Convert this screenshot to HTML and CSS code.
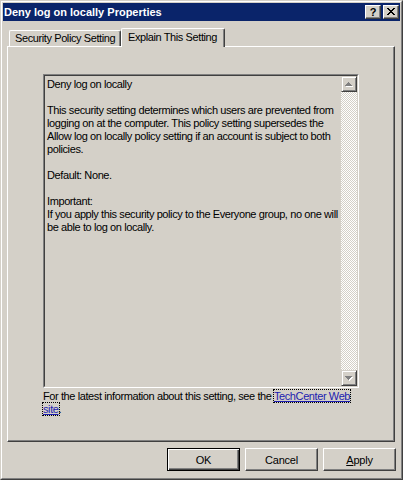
FILE: index.html
```html
<!DOCTYPE html>
<html lang="en">
<head>
    <meta charset="UTF-8">
    <title>Deny log on locally Properties</title>
    <link rel="stylesheet" href="styles.css">
</head>
<body>
    <div class="window">
        <div class="frame">
            <div class="titlebar">
                <span class="title">Deny log on locally Properties</span>
                <div class="caption-buttons">
                    <span class="caption-btn help">?</span>
                    <span class="caption-btn close">
                        <svg width="8" height="7" viewBox="0 0 8 7">
                            <path d="M0 0h2v1h-2zM6 0h2v1h-2zM1 1h2v1h-2zM5 1h2v1h-2zM2 2h4v1h-4zM3 3h2v1h-2zM2 4h4v1h-4zM1 5h2v1h-2zM5 5h2v1h-2zM0 6h2v1h-2zM6 6h2v1h-2z" fill="#000"/>
                        </svg>
                    </span>
                </div>
            </div>

            <div class="content">
                <div class="tabs">
                    <div class="tab tab-policy">Security Policy Setting</div>
                    <div class="tab tab-explain selected">Explain This Setting</div>
                </div>

                <div class="panel">
                    <div class="explain-box">
                        <div class="explain-inner">
                            <div class="explain-text">
                                <p>Deny log on locally</p>
                                <p>This security setting determines which users are prevented from logging on at the computer. This policy setting supersedes the Allow log on locally policy setting if an account is subject to both policies.</p>
                                <p>Default: None.</p>
                                <p>Important:<br>If you apply this security policy to the Everyone group, no one will be able to log on locally.</p>
                            </div>
                            <div class="scrollbar">
                                <div class="scroll-btn">
                                    <svg width="8" height="5" viewBox="0 0 8 5">
                                        <path d="M4 1h1v1h-1zM3 2h3v1h-3zM2 3h5v1h-5zM1 4h7v1h-7z" fill="#fff"/>
                                        <path d="M3 0h1v1h-1zM2 1h3v1h-3zM1 2h5v1h-5zM0 3h7v1h-7z" fill="#808080"/>
                                    </svg>
                                </div>
                                <div class="scroll-track"></div>
                                <div class="scroll-btn">
                                    <svg width="8" height="5" viewBox="0 0 8 5">
                                        <path d="M1 1h7v1h-7zM2 2h5v1h-5zM3 3h3v1h-3zM4 4h1v1h-1z" fill="#fff"/>
                                        <path d="M0 0h7v1h-7zM1 1h5v1h-5zM2 2h3v1h-3zM3 3h1v1h-1z" fill="#808080"/>
                                    </svg>
                                </div>
                            </div>
                        </div>
                    </div>
                    <p class="more-info">For the latest information about this setting, see the <a href="#" class="link"><span class="focus">TechCenter Web</span> <span class="focus">site</span></a>.</p>
                </div>

                <div class="buttons">
                    <button class="btn default">OK</button>
                    <button class="btn">Cancel</button>
                    <button class="btn"><u>A</u>pply</button>
                </div>
            </div>
        </div>
    </div>
</body>
</html>
```

FILE: styles.css
```css
:root {
    --face: #d4d0c8;
    --light: #ffffff;
    --shadow: #808080;
    --dark: #404040;
    --title: #0a246a;
}

* {
    margin: 0;
    padding: 0;
    box-sizing: border-box;
}

body {
    font-family: Tahoma, 'Liberation Sans', Arial, sans-serif;
    font-size: 11px;
    color: #000;
    background-color: var(--face);
}

.window {
    width: 403px;
    height: 480px;
    background-color: var(--face);
    border: 1px solid;
    border-color: var(--face) var(--dark) var(--dark) var(--face);
}

.frame {
    height: 100%;
    border: 1px solid;
    border-color: var(--light) var(--shadow) var(--shadow) var(--light);
    padding: 1px;
    display: flex;
    flex-direction: column;
}

.titlebar {
    height: 18px;
    background-color: var(--title);
    display: flex;
    align-items: center;
    justify-content: space-between;
    padding: 0 1px 0 1px;
}

.title {
    color: #fff;
    font-weight: bold;
    line-height: 18px;
}

.caption-buttons {
    display: flex;
    gap: 2px;
}

.caption-btn {
    width: 16px;
    height: 14px;
    background-color: var(--face);
    border: 1px solid;
    border-color: var(--light) var(--dark) var(--dark) var(--light);
    box-shadow: inset -1px -1px var(--shadow);
    display: flex;
    align-items: center;
    justify-content: center;
}

.caption-btn.help {
    font-weight: bold;
    font-size: 11px;
    line-height: 12px;
    padding-bottom: 1px;
}

.caption-btn.close svg {
    margin-top: -1px;
}

.content {
    flex: 1;
    padding: 7px 5px 0 4px;
    letter-spacing: -0.4px;
}

.tabs {
    height: 18px;
    display: flex;
    align-items: flex-end;
    padding-left: 2px;
}

.tab {
    height: 16px;
    line-height: 13px;
    padding: 1px 0 0 5px;
    border-top: 1px solid var(--light);
    border-left: 1px solid var(--light);
    border-right: 1px solid var(--dark);
    border-radius: 2px 2px 0 0;
    box-shadow: inset -1px 0 var(--shadow);
    white-space: nowrap;
}

.tab-policy {
    width: 112px;
}

.tab-explain {
    width: 104px;
}

.tab.selected {
    height: 19px;
    margin-bottom: -1px;
    padding: 2px 0 0 6px;
    background-color: var(--face);
    position: relative;
    z-index: 1;
}

.panel {
    height: 396px;
    border: 1px solid;
    border-color: var(--light) var(--dark) var(--dark) var(--light);
    box-shadow: inset -1px -1px var(--shadow);
    padding: 27px 0 0 35px;
}

.explain-box {
    width: 316px;
    height: 314px;
    border: 1px solid;
    border-color: var(--shadow) var(--light) var(--light) var(--shadow);
}

.explain-inner {
    height: 100%;
    display: flex;
    border: 1px solid;
    border-color: var(--dark) var(--face) var(--face) var(--dark);
}

.explain-text {
    flex: 1;
    padding: 2px 0 0 2px;
    line-height: 13px;
}

.explain-text p {
    margin-bottom: 13px;
}

.scrollbar {
    width: 16px;
    display: flex;
    flex-direction: column;
}

.scroll-btn {
    height: 16px;
    background-color: var(--face);
    border: 1px solid;
    border-color: var(--face) var(--dark) var(--dark) var(--face);
    box-shadow: inset 1px 1px var(--light), inset -1px -1px var(--shadow);
    display: flex;
    align-items: center;
    justify-content: center;
}

.scroll-track {
    flex: 1;
    background-color: #fff;
    background-image: conic-gradient(var(--face) 25%, #fff 0 50%, var(--face) 0 75%, #fff 0);
    background-size: 2px 2px;
}

.more-info {
    width: 316px;
    margin-top: 2px;
    line-height: 13px;
}

.link {
    color: #1c1cb0;
    text-decoration: underline;
}

.focus {
    outline: 1px dotted #000;
}

.buttons {
    display: flex;
    justify-content: flex-end;
    gap: 5px;
    margin-top: 6px;
    margin-right: -1px;
}

.btn {
    width: 73px;
    height: 23px;
    font-family: inherit;
    font-size: 11px;
    letter-spacing: -0.2px;
    color: #000;
    background-color: var(--face);
    border: 1px solid;
    border-color: var(--light) var(--dark) var(--dark) var(--light);
    box-shadow: inset -1px -1px var(--shadow);
}

.btn.default {
    border-color: #000;
    box-shadow: inset 1px 1px var(--light), inset -1px -1px var(--dark), inset -2px -2px var(--shadow);
}
```
